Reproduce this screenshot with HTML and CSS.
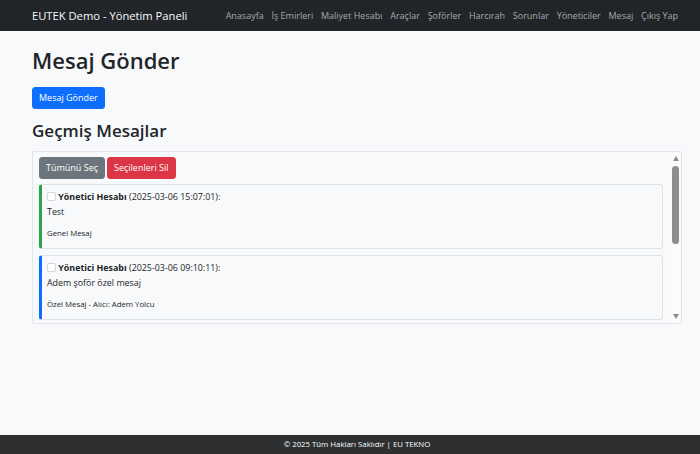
FILE: index.html
```html
<!DOCTYPE html>
<html lang="tr">
<head>
<meta charset="utf-8">
<title>Mesaj Gönder - EUTEK Demo</title>
<link rel="stylesheet" href="styles.css">
</head>
<body>
<nav class="navbar">
  <a class="brand" href="#">EUTEK Demo - Yönetim Paneli</a>
  <ul class="nav-links">
    <li><a href="#">Anasayfa</a></li>
    <li><a href="#">İş Emirleri</a></li>
    <li><a href="#">Maliyet Hesabı</a></li>
    <li><a href="#">Araçlar</a></li>
    <li><a href="#">Şoförler</a></li>
    <li><a href="#">Harcırah</a></li>
    <li><a href="#">Sorunlar</a></li>
    <li><a href="#">Yöneticiler</a></li>
    <li><a href="#">Mesaj</a></li>
    <li><a href="#">Çıkış Yap</a></li>
  </ul>
</nav>
<main class="content">
  <h1 class="page-title">Mesaj Gönder</h1>
  <button class="btn btn-primary" type="button">Mesaj Gönder</button>
  <h2 class="section-title">Geçmiş Mesajlar</h2>
  <div class="message-box">
    <div class="message-list">
      <div class="toolbar">
        <button class="btn btn-secondary" type="button">Tümünü Seç</button>
        <button class="btn btn-danger" type="button">Seçilenleri Sil</button>
      </div>
      <div class="message message-general">
        <p class="message-text"><input class="check" type="checkbox"> <strong>Yönetici Hesabı</strong> (2025-03-06 15:07:01):<br>Test</p>
        <small class="message-meta">Genel Mesaj</small>
      </div>
      <div class="message message-private">
        <p class="message-text"><input class="check" type="checkbox"> <strong>Yönetici Hesabı</strong> (2025-03-06 09:10:11):<br>Adem şoför özel mesaj</p>
        <small class="message-meta">Özel Mesaj - Alıcı: Adem Yolcu</small>
      </div>
    </div>
    <div class="scrollbar" aria-hidden="true">
      <span class="arrow arrow-up"></span>
      <span class="thumb"></span>
      <span class="arrow arrow-down"></span>
    </div>
  </div>
</main>
<footer class="footer">© 2025 Tüm Hakları Saklıdır | EU TEKNO</footer>
</body>
</html>
```
FILE: styles.css
```css
* { box-sizing: border-box; }
html, body { height: 100%; }
body {
  margin: 0;
  min-height: 100vh;
  display: flex;
  flex-direction: column;
  background: #f8f9fa;
  color: #212529;
  font-family: "Open Sans", "Noto Sans", sans-serif;
  font-size: 8.9px;
  line-height: 15px;
}
a { text-decoration: none; }

.navbar {
  height: 31px;
  background: #212529;
  display: flex;
  align-items: center;
  justify-content: space-between;
  padding: 0 18px 0 32px;
  flex-shrink: 0;
}
.brand {
  color: #f8f9fa;
  font-size: 11.2px;
  white-space: nowrap;
}
.nav-links {
  list-style: none;
  margin: 0;
  padding: 0;
  display: flex;
}
.nav-links a {
  display: block;
  padding: 0 3.9px;
  color: rgba(255,255,255,0.6);
  font-size: 9px;
  white-space: nowrap;
}

.content {
  padding: 16px 18px 0 32px;
}
.page-title {
  margin: 0 0 13px;
  font-size: 22px;
  font-weight: 600;
  line-height: 27px;
}
.section-title {
  margin: 12px 0 10px;
  font-size: 17px;
  font-weight: 600;
  line-height: 20px;
}
.btn {
  font-family: inherit;
  font-size: 9px;
  line-height: 12px;
  padding: 4px 6px;
  border: 1px solid transparent;
  border-radius: 3px;
  color: #fff;
  cursor: pointer;
}
.btn-primary { background: #0d6efd; border-color: #0d6efd; }
.btn-secondary { background: #6c757d; border-color: #6c757d; }
.btn-danger { background: #dc3545; border-color: #dc3545; }

.message-box {
  height: 173px;
  display: flex;
  border: 1px solid #e3e5e8;
  border-radius: 2px;
  background: #f8f9fa;
  overflow: hidden;
}
.message-list {
  flex: 1;
  min-width: 0;
  padding: 5px 7px 0 6px;
}
.toolbar {
  display: flex;
  gap: 2px;
  margin-bottom: 5px;
}
.message {
  border: 1px solid #e0e3e6;
  border-left: 3px solid #28a745;
  border-radius: 3px;
  padding: 4px 6px 8px 5px;
  margin-bottom: 6px;
}
.message-private { border-left-color: #0d6efd; }
.message-text {
  margin: 0 0 8px;
}
.message-meta {
  font-size: 7.8px;
  line-height: 12.75px;
  display: block;
}
.check {
  appearance: none;
  -webkit-appearance: none;
  width: 9px;
  height: 9px;
  margin: 0;
  border: 1px solid #d3d6da;
  border-radius: 2px;
  background: #fff;
  vertical-align: -1px;
}

.scrollbar {
  width: 11px;
  flex-shrink: 0;
  display: flex;
  flex-direction: column;
  align-items: center;
  background: #fbfbfb;
  padding: 4px 0 4px;
}
.arrow {
  width: 0;
  height: 0;
  border-left: 3.5px solid transparent;
  border-right: 3.5px solid transparent;
}
.arrow-up { border-bottom: 5px solid #8d8d8d; }
.arrow-down { border-top: 5px solid #8d8d8d; margin-top: auto; }
.thumb {
  width: 7px;
  height: 78px;
  margin-top: 5px;
  background: #8d8d8d;
  border-radius: 4px;
}

.footer {
  margin-top: auto;
  height: 19px;
  padding-left: 14px;
  background: #2d2f31;
  color: #fff;
  font-size: 7.8px;
  display: flex;
  align-items: center;
  justify-content: center;
  flex-shrink: 0;
}
```
